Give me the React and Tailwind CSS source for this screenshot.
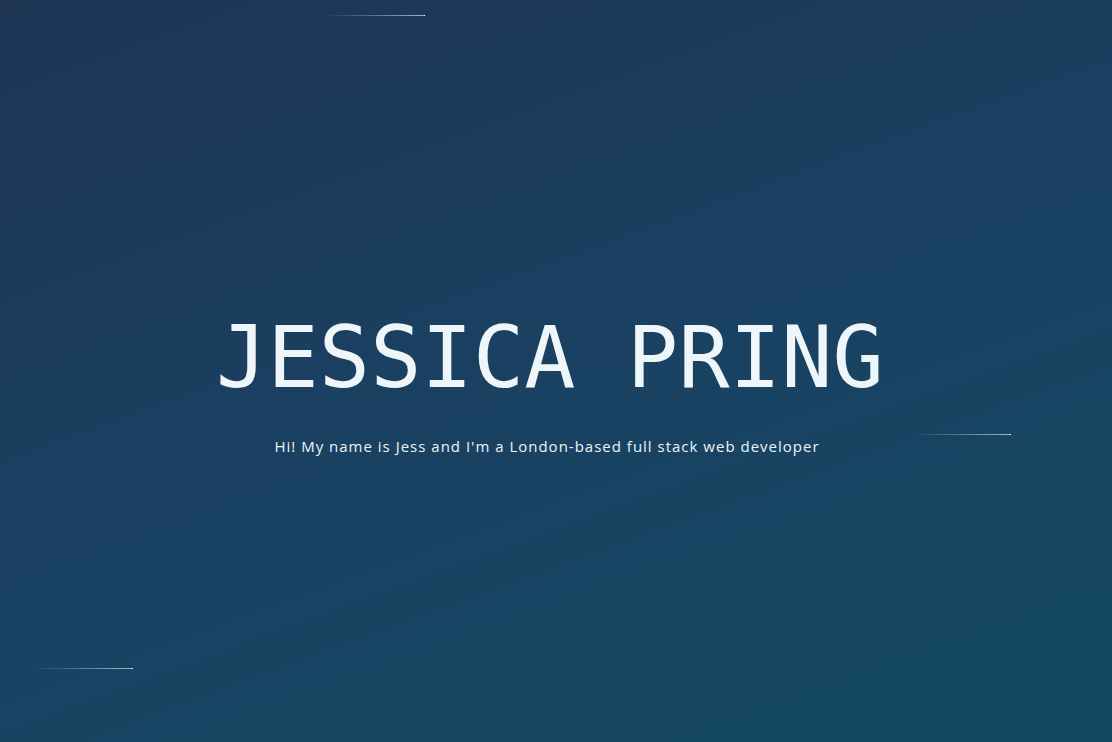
export default function App() {
  const stars = [
    { top: 15, left: 325 },
    { top: 434, left: 911 },
    { top: 668, left: 33 },
  ];
  return (
    <div className="relative w-full h-[742px] overflow-hidden bg-[linear-gradient(160deg,#1e3554_0%,#1a4162_50%,#134a62_100%)] flex flex-col items-center">
      {stars.map((s, i) => (
        <div key={i} className="absolute flex items-center" style={{ top: s.top, left: s.left }}>
          <div className="w-[99px] h-px bg-[linear-gradient(90deg,rgba(255,255,255,0)_0%,rgba(255,255,255,0.6)_100%)]" />
          <div className="w-px h-px bg-white" />
        </div>
      ))}
      <h1 className="mt-[308px] pr-[12px] text-[85px] leading-[100px] text-[#eef6fa] tracking-[0.2px] font-['DejaVu_Sans_Mono',monospace] font-normal">
        JESSICA PRING
      </h1>
      <p className="mt-[27px] pr-[18px] text-[15px] tracking-[1px] text-[#eef3f7] font-['Open_Sans',sans-serif]">
        Hi! My name is Jess and I'm a London-based full stack web developer
      </p>
    </div>
  );
}
